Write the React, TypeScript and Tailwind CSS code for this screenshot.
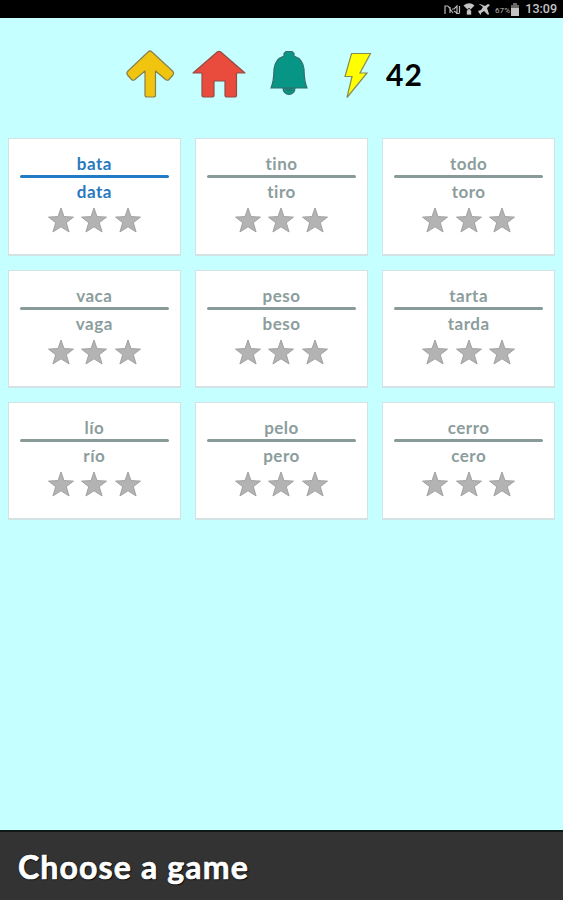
const games = [
  { top: 'bata', bottom: 'data', active: true },
  { top: 'tino', bottom: 'tiro' },
  { top: 'todo', bottom: 'toro' },
  { top: 'vaca', bottom: 'vaga' },
  { top: 'peso', bottom: 'beso' },
  { top: 'tarta', bottom: 'tarda' },
  { top: 'lío', bottom: 'río' },
  { top: 'pelo', bottom: 'pero' },
  { top: 'cerro', bottom: 'cero' },
];

function Star() {
  return (
    <svg className="h-[26px] w-[28px]" viewBox="0 0 28 26">
      <path
        d="M14 1 17 9.600 26.500 10.100 19.300 15.700 22.100 25 14 19.800 5.900 25 8.700 15.700 1.500 10.100 11 9.600Z"
        fill="#b3b3b3"
        stroke="#9c9c9c"
        strokeWidth=".9"
      />
    </svg>
  );
}

function GameCard({ top, bottom, active }: { top: string; bottom: string; active?: boolean }) {
  return (
    <button
      className={
        'flex h-[117.500px] flex-col items-center border border-b-2 border-[#d3e3e3] bg-white px-[11px] pt-[14px] text-[17px] leading-[22px] font-bold tracking-[0.5px] ' +
        (active ? 'text-[#2879bd]' : 'text-[#8b9d9c]')
      }
    >
      <span>{top}</span>
      <span className={'h-[3px] w-full rounded-full ' + (active ? 'bg-[#217bc5]' : 'bg-[#899b99]')} />
      <span className="mt-[3px]">{bottom}</span>
      <span className="mt-[4px] flex gap-[5.7px]">
        <Star />
        <Star />
        <Star />
      </span>
    </button>
  );
}

function StatusBar() {
  return (
    <div className="flex h-[18px] items-center justify-end bg-black pr-[6px] text-[#c4c4c4]">
      <svg className="h-[18px] w-[79px]" viewBox="0 0 79 18" fill="none" stroke="#b8b8b8">
        <path d="M2 14V6h3M5 6l5 7M7 13V7M9 9h2l3-3v7l-3-2M16.500 6v7.500M13 13.500h3" strokeWidth="1.2" />
        <path d="M20.500 5.500q6-4.500 11 0L26 11Z" fill="#c4c4c4" stroke="none" />
        <path d="m23.500 11 2.500-3 2.500 3v4h-5Z" fill="#c4c4c4" stroke="#111" strokeWidth=".8" />
        <path d="m37 4 5 2 3-2 2 1-3 3 2 6-1 1-4-4-3 2v2l-2-2-1-2 3-1 2-3-4-3Z" fill="#c4c4c4" stroke="none" />
        <text x="52" y="12.5" fill="#b8b8b8" stroke="none" fontFamily="Roboto, sans-serif" fontSize="8" textLength="15">67%</text>
        <path d="M68 5h2V3h4v2h2v11h-8Z" fill="#696969" stroke="none" />
        <path d="M68 8h8v8h-8Z" fill="#c4c4c4" stroke="none" />
      </svg>
      <span className="ml-[3px] font-[Roboto,sans-serif] text-[12.5px] leading-[18px] font-medium">13:09</span>
    </div>
  );
}

export default function App() {
  return (
    <main className="flex h-[900px] w-[563px] flex-col bg-[#c6ffff] font-[Lato,sans-serif]">
      <StatusBar />
      <header className="flex h-[120px] items-start pt-[31px] pl-[125px]">
        <svg className="h-[50px] w-[51px]" viewBox="0 0 51 50" fill="#f1c40f" stroke="#87824e" strokeWidth="1.2" strokeLinejoin="round">
          <path d="M23 3q2-2 4 0l20.500 19q2 2 .5 4l-4 4.500q-1.500 1.500-3.500 0L30.500 22v24q0 2-2 2h-6.500q-2 0-2-2V22L10 30.500q-2 1.500-3.500 0L2.500 26q-1.500-2 .5-4Z" />
        </svg>
        <svg className="ml-[16px] h-[50px] w-[54px]" viewBox="0 0 54 50" fill="#e94b3c" stroke="#944c45" strokeWidth="1.2" strokeLinejoin="round">
          <path d="M25.500 2.800q1.500-1 3 0L53 24H44.500v22q0 2-2 2H35q-2 0-2-2V32h-11v14q0 2-2 2h-8q-2 0-2-2V24H1Z" />
        </svg>
        <svg className="ml-[23px] h-[50px] w-[40px]" viewBox="0 0 40 50" fill="#079586" stroke="#346d68" strokeWidth="1.2">
          <path d="M14 39a6 6.500 0 0 0 12 0" />
          <path d="M17.500 39a2.500 2.500 0 0 0 5 0" fill="none" />
          <path d="M17 2.500h6l2 2v2.500q9 3 10 13c.3 7 0 12 3 19H2c3-7 2.700-12 3-19Q6 10 15 7V4.500Z" />
        </svg>
        <svg className="ml-[34px] h-[50px] w-[30px]" viewBox="0 0 30 50" fill="#ffff00" stroke="#898b55" strokeWidth="1.2">
          <path d="M8.500 4.500H27.500L17 24h7L4 48.500 9 27.500H2Z" />
        </svg>
        <span className="ml-[13px] mt-[6px] text-[30px] leading-[38px] font-bold tracking-[1px] text-black">42</span>
      </header>
      <section className="grid grid-cols-3 gap-x-[14.500px] gap-y-[14.500px] px-[8px]">
        {games.map((game) => (
          <GameCard key={game.top} {...game} />
        ))}
      </section>
      <footer className="mt-auto flex h-[70px] items-center border-t-2 border-[#101818] bg-[#333333] pl-[18px] pb-[3px] pt-[5px]">
        <h1 className="text-[32px] leading-[40px] font-bold tracking-[1.150px] text-white [-webkit-text-stroke:0.7px_white] [text-shadow:0_0_2px_black,1px_1px_1px_black]">Choose a game</h1>
      </footer>
    </main>
  );
}
